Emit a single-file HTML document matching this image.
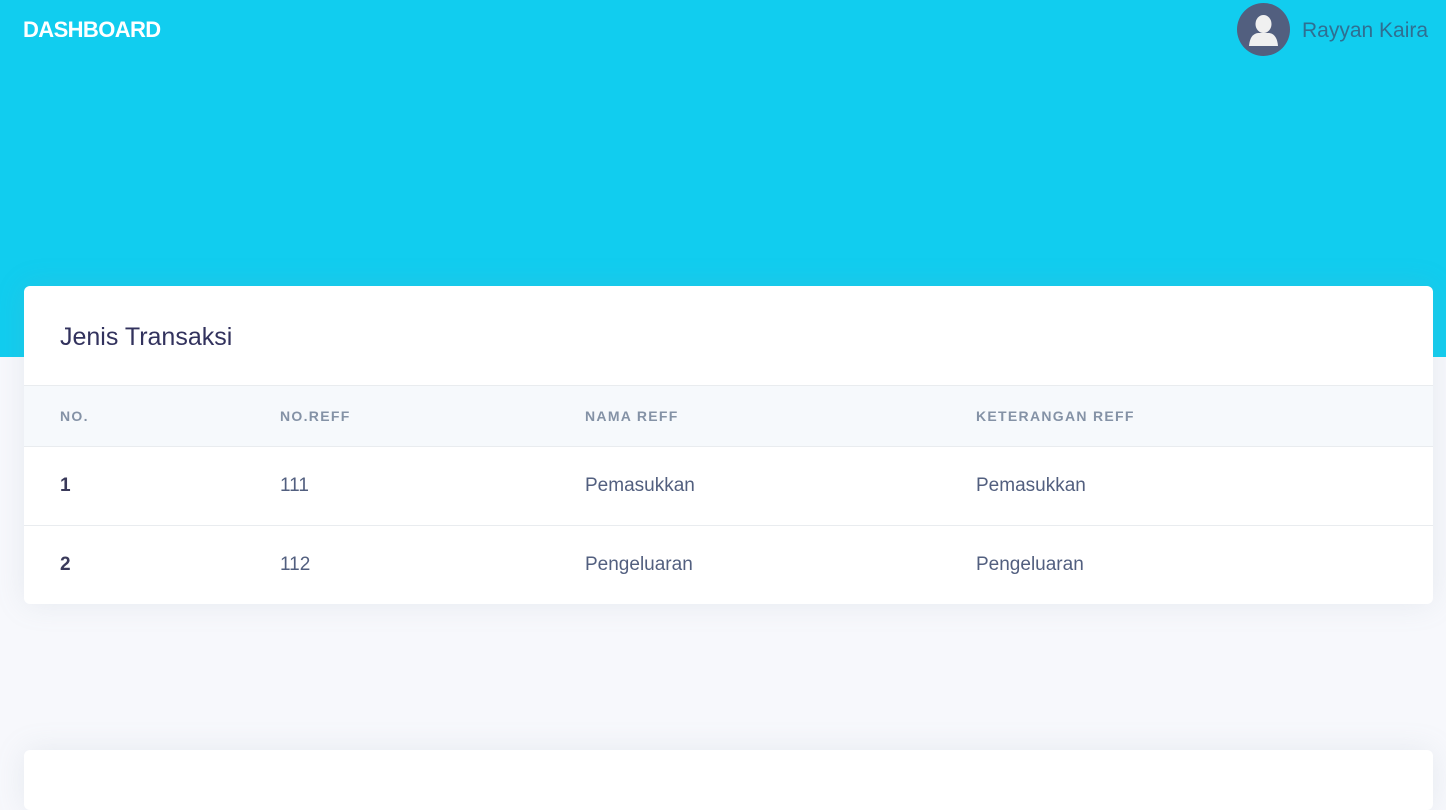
<!DOCTYPE html>
<html><head><meta charset="utf-8"><style>
*{box-sizing:border-box;margin:0;padding:0}
body{width:1446px;height:784px;overflow:hidden;background:#f7f8fc;font-family:"Liberation Sans",sans-serif;position:relative}
.hero{position:absolute;left:0;top:0;width:1446px;height:357px;background:#11cdef}
.brand{position:absolute;left:23px;top:17px;color:#fff;font-weight:bold;font-size:22px;letter-spacing:-0.6px}
.av{position:absolute;left:1237px;top:3px;width:53px;height:53px;border-radius:50%;background:#525f7f;overflow:hidden}
.name{position:absolute;left:1302px;top:19px;color:#2f6f92;font-size:21px}
.card{position:absolute;left:24px;top:286px;width:1409px;height:318px;background:#fff;border-radius:6px;box-shadow:0 0 30px rgba(136,152,170,.15);overflow:hidden}
.card h3{position:absolute;left:36px;top:37px;font-size:25px;font-weight:normal;color:#32325d}
table{position:absolute;top:99px;left:0;width:100%;border-collapse:collapse}
th{background:#f6f9fc;height:61px;text-align:left;font-size:14px;color:#8492a6;letter-spacing:1.3px;font-weight:bold;border-top:1px solid #e9ecef;border-bottom:1px solid #e9ecef}
td{height:79px;font-size:19px;color:#525f7f;border-bottom:1px solid #e9ecef}
tr:last-child td{border-bottom:none}
td:first-child{font-weight:bold;color:#3a3a5a}
th:first-child,td:first-child{padding-left:36px}
.card2{position:absolute;left:24px;top:750px;width:1409px;height:60px;background:#fff;border-radius:6px;box-shadow:0 0 30px rgba(136,152,170,.15)}
</style></head><body>
<div class="hero"></div>
<div class="brand">DASHBOARD</div>
<div class="av"><svg width="53" height="53" viewBox="0 0 53 53"><ellipse cx="26.5" cy="21" rx="8" ry="9" fill="#f0f0f0"/><path d="M12 43 Q13 31 21 30 L32 30 Q40 31 41 43 Z" fill="#f0f0f0"/></svg></div>
<div class="name">Rayyan Kaira</div>
<div class="card"><h3>Jenis Transaksi</h3>
<table><tr><th style="width:256px">NO.</th><th style="width:305px">NO.REFF</th><th style="width:391px">NAMA REFF</th><th>KETERANGAN REFF</th></tr>
<tr><td>1</td><td>111</td><td>Pemasukkan</td><td>Pemasukkan</td></tr>
<tr><td>2</td><td>112</td><td>Pengeluaran</td><td>Pengeluaran</td></tr></table></div>
<div class="card2"></div>
</body></html>
